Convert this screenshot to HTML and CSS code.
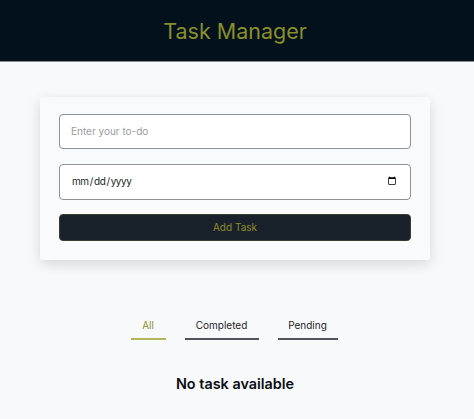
FILE: index.html
```html
<!DOCTYPE html>
<html lang="en">

<head>
  <meta charset="UTF-8">
  <meta name="viewport" content="width=device-width, initial-scale=1.0">
  <title>Task Manager</title>
  <link rel="stylesheet" href="styles.css">
</head>

<body>

  <header class="header">
    <h1>Task Manager</h1>
  </header>

  <main class="main">
    <form class="card">
      <input class="field" type="text" placeholder="Enter your to-do">
      <input class="field field-date" type="date">
      <button class="add-btn" type="button">Add Task</button>
    </form>

    <nav class="tabs">
      <button class="tab tab-all active" type="button">All</button>
      <button class="tab tab-completed" type="button">Completed</button>
      <button class="tab tab-pending" type="button">Pending</button>
    </nav>

    <h2 class="empty">No task available</h2>
  </main>

</body>

</html>
```

FILE: styles.css
```css
body {
  margin: 0;
  height: 419px;
  overflow: hidden;
  font-family: Inter, Arial, sans-serif;
  background-color: #f8f9fb;
  color: #0a0d12;
}

.header {
  display: flex;
  justify-content: center;
  align-items: center;
  height: 61px;
  padding-right: 4px;
  background-color: #02111b;
  border-bottom: 1px solid #8a8f93;
}

.header h1 {
  margin: 0;
  font-size: 21.5px;
  font-weight: 400;
  color: #8a8e2c;
}

.main {
  display: flex;
  flex-direction: column;
  align-items: center;
  padding-right: 4px;
}

.card {
  display: flex;
  flex-direction: column;
  box-sizing: border-box;
  width: 390px;
  height: 163px;
  margin-top: 35px;
  padding: 17px 19px;
  background-color: #f9fafb;
  border-radius: 3px;
  box-shadow: 0 4px 14px rgba(0, 0, 0, 0.14);
}

.field {
  box-sizing: border-box;
  width: 100%;
  height: 35px;
  margin-bottom: 15px;
  padding: 0 11px 2px;
  font-family: inherit;
  font-size: 10px;
  color: #1a1f24;
  background-color: white;
  border: 1px solid #8f9296;
  border-radius: 4px;
}

.field::placeholder {
  color: #9a9ca1;
}

.field-date {
  height: 36px;
  margin-bottom: 14px;
  letter-spacing: -0.4px;
}

.add-btn {
  height: 27px;
  padding: 0 0 2px;
  font-family: inherit;
  font-size: 10px;
  color: #8f8a2e;
  background-color: #19212a;
  border: 1px solid #3a3d2c;
  border-radius: 4px;
  cursor: pointer;
}

.tabs {
  display: flex;
  gap: 19px;
  margin-top: 53px;
  padding-right: 2px;
}

.tab {
  height: 27px;
  padding: 0 0 1px;
  font-family: inherit;
  font-size: 10px;
  color: #1d2228;
  background: none;
  border: none;
  border-bottom: 2px solid #50545a;
  cursor: pointer;
}

.tab-all {
  width: 35px;
}

.tab-completed {
  width: 74px;
}

.tab-pending {
  width: 60px;
}

.tab.active {
  color: #8f8f2a;
  border-bottom-color: #b5b55c;
}

.empty {
  margin: 35px 0 0;
  font-size: 14.4px;
  font-weight: 600;
}
```
